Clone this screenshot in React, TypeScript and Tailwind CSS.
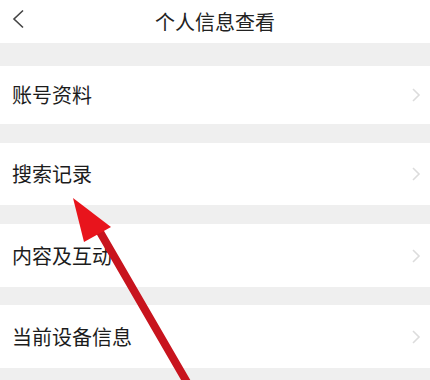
import React from "react";

const Chevron = () => (
  <svg width="10" height="14" viewBox="0 0 10 14" className="mr-[9px]">
    <polyline points="2,1 8,7 2,13" fill="none" stroke="#dcdcdc" strokeWidth="1.6" />
  </svg>
);

const Row = ({ label, h }: { label: string; h: string }) => (
  <div className={`flex items-center justify-between bg-white pl-[12px] ${h}`}>
    <span className="text-[20px] leading-none text-[#1c1c1c]">{label}</span>
    <Chevron />
  </div>
);

export default function App() {
  return (
    <div
      className="relative w-[430px] h-[380px] overflow-hidden bg-[#efefef]"
      style={{ fontFamily: '"Noto Sans CJK SC", "Noto Sans", sans-serif' }}
    >
      <div className="relative flex h-[43px] items-center justify-center bg-white">
        <svg width="14" height="20" viewBox="0 0 14 20" className="absolute left-[11px] top-[9px]">
          <polyline points="12,1.5 3,10 12,18.5" fill="none" stroke="#444" strokeWidth="1.6" />
        </svg>
        <span className="text-[20px] leading-none text-[#222]">个人信息查看</span>
      </div>
      <div className="h-[23px]" />
      <Row label="账号资料" h="h-[58px]" />
      <div className="h-[19px]" />
      <Row label="搜索记录" h="h-[62px]" />
      <div className="h-[19px]" />
      <Row label="内容及互动" h="h-[63px]" />
      <div className="h-[18px]" />
      <Row label="当前设备信息" h="h-[63px]" />

      <svg className="absolute left-0 top-0" width="430" height="380" viewBox="0 0 430 380">
        <line x1="100" y1="232" x2="188" y2="384" stroke="#c8141e" strokeWidth="8" strokeLinecap="round" />
        <polygon points="73,198 111,227 84,242" fill="#e8141c" />
      </svg>
    </div>
  );
}
